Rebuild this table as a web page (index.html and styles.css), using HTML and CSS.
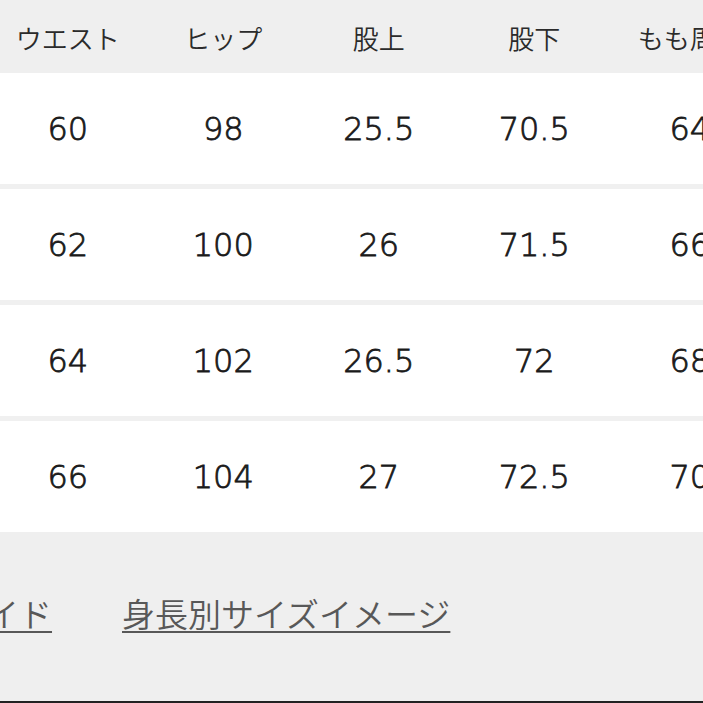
FILE: index.html
```html
<!DOCTYPE html>
<html lang="ja">
<head>
<meta charset="utf-8">
<link rel="stylesheet" href="styles.css">
</head>
<body>
<div class="page">
  <div class="table">
    <div class="row head">
      <div class="cell">ウエスト</div>
      <div class="cell">ヒップ</div>
      <div class="cell">股上</div>
      <div class="cell">股下</div>
      <div class="cell">もも周り</div>
    </div>
    <div class="row body">
      <div class="cell">60</div>
      <div class="cell">98</div>
      <div class="cell">25.5</div>
      <div class="cell">70.5</div>
      <div class="cell">64</div>
    </div>
    <div class="row body">
      <div class="cell">62</div>
      <div class="cell">100</div>
      <div class="cell">26</div>
      <div class="cell">71.5</div>
      <div class="cell">66</div>
    </div>
    <div class="row body">
      <div class="cell">64</div>
      <div class="cell">102</div>
      <div class="cell">26.5</div>
      <div class="cell">72</div>
      <div class="cell">68</div>
    </div>
    <div class="row body">
      <div class="cell">66</div>
      <div class="cell">104</div>
      <div class="cell">27</div>
      <div class="cell">72.5</div>
      <div class="cell">70</div>
    </div>
  </div>
  <div class="footer">
    <a class="link" href="#">サイズガイド</a>
    <a class="link" href="#">身長別サイズイメージ</a>
  </div>
</div>
</body>
</html>
```

FILE: styles.css
```css
html, body {
  margin: 0;
  padding: 0;
  background: #efefef;
  overflow: hidden;
}

.page {
  width: 703px;
  height: 703px;
  overflow: hidden;
  font-family: "Noto Sans CJK JP", "Noto Sans", sans-serif;
  background: #efefef;
  display: flex;
  flex-direction: column;
}

.table {
  display: flex;
  flex-direction: column;
  gap: 5px;
  margin-left: -10px;
  width: 777.5px;
  background: #f0f0f0;
}

.row {
  display: grid;
  grid-template-columns: repeat(5, 155.5px);
  align-items: center;
}

.row.head {
  height: 73px;
  background: #efefef;
  margin-bottom: -5px;
}

.row.head .cell {
  font-size: 26px;
  font-weight: 350;
  color: #2b2b2b;
  padding-top: 2px;
}

.row.body {
  height: 111px;
  background: #ffffff;
}

.cell {
  text-align: center;
  white-space: nowrap;
}

.row.body .cell {
  font-family: "DejaVu Sans", sans-serif;
  font-weight: 200;
  font-size: 32px;
  color: #1a1a1a;
  -webkit-text-stroke: 0.8px #1a1a1a;
}

.footer {
  flex: 1;
  display: flex;
  gap: 70px;
  padding-top: 57px;
  margin-left: -145px;
  border-bottom: 2px solid #222;
}

.link {
  font-size: 33px;
  font-weight: 350;
  line-height: 48px;
  height: 48px;
  color: #585858;
  text-decoration: underline;
  text-decoration-thickness: 2px;
  text-underline-offset: 4px;
  white-space: nowrap;
}
```
